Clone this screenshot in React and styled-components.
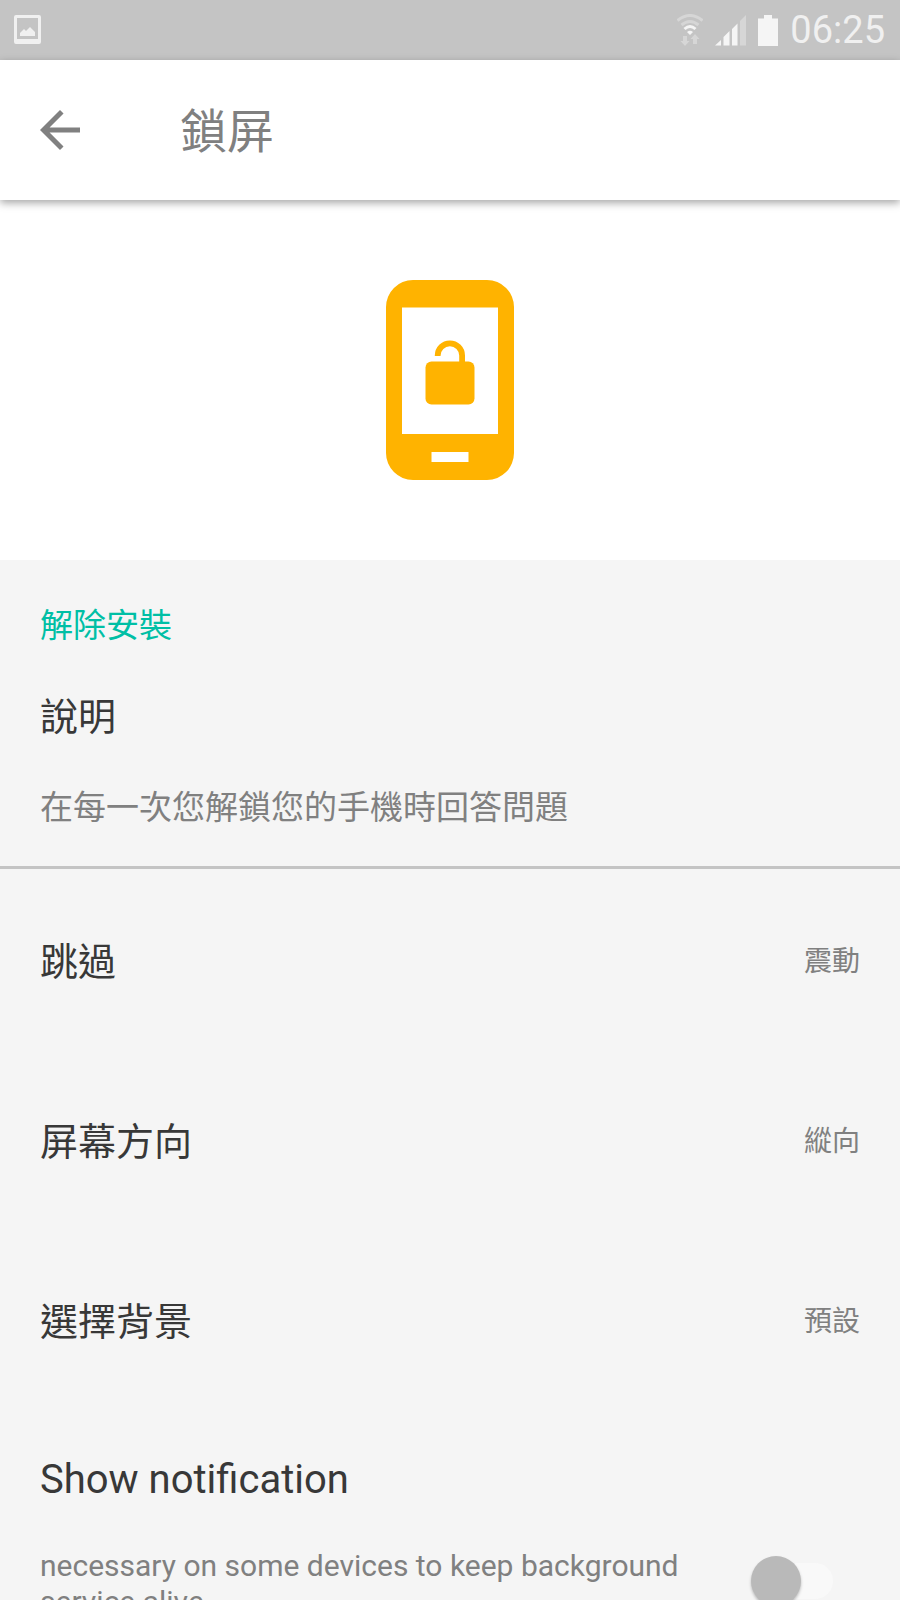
import React, { useState } from 'react';
import styled, { createGlobalStyle } from 'styled-components';

const settings = [
  { name: '跳過', value: '震動' },
  { name: '屏幕方向', value: '縱向' },
  { name: '選擇背景', value: '預設' },
];

const StatusBar = () => {
  return (
    <StatusDiv>
      <svg width="28" height="30" viewBox="0 0 28 30" aria-hidden="true">
        <path
          fill="#f0f0f0"
          fillRule="evenodd"
          d="M2 0H25Q27 0 27 2V27Q27 29 25 29H2Q0 29 0 27V2Q0 0 2 0ZM3 3V24H24V3Z"
        />
        <path fill="#f0f0f0" d="M6 18L10 14L12 16L16 12L21 17V21H6Z" />
      </svg>
      <StatusIcons>
        <svg width="26" height="32" viewBox="1 0 26 32" aria-hidden="true">
          <g fill="none" strokeWidth="3">
            <path stroke="#d6d6d6" d="M1.500 6.500Q14 -3.500 26.500 6.500" />
            <path stroke="#d6d6d6" d="M5.500 11Q14 4 22.500 11" />
            <path stroke="#f5f5f5" d="M8.500 15Q14 10 19.500 15" />
          </g>
          <path fill="#f5f5f5" d="M11 18Q14 15.500 17 18L14 21Z" />
          <path fill="#d6d6d6" d="M7 22H11V27H13.500L9 32L4.500 27H7ZM17 30V25H14.500L19 20L23.500 25H21V30Z" />
        </svg>
        <svg width="31" height="31" viewBox="0 0 31 31" aria-hidden="true">
          <path fill="#f5f5f5" d="M0 30.500L6 25V30.500ZM8.500 30.500V22L14.500 16V30.500ZM17 30.500V14L22.500 8.500V30.500Z" />
          <path fill="#d6d6d6" d="M25 30.500V6L31 0V30.500Z" />
        </svg>
        <svg width="20" height="31" viewBox="0 0 20 31" aria-hidden="true">
          <path fill="#f5f5f5" d="M6 0H14V3.500H20V31H0V3.500H6Z" />
        </svg>
        <Clock>06:25</Clock>
      </StatusIcons>
    </StatusDiv>
  );
};

const PhoneIcon = () => {
  return (
    <svg width="128" height="200" viewBox="0 0 128 200" aria-hidden="true">
      <path
        fill="#ffb300"
        fillRule="evenodd"
        d="M27 0H101A27 27 0 0 1 128 27V173A27 27 0 0 1 101 200H27A27 27 0 0 1 0 173V27A27 27 0 0 1 27 0ZM16 27.500V154H112V27.500ZM45.500 172V182H82.500V172Z"
      />
      <rect x="39.500" y="81.500" width="49" height="43" rx="6" fill="#ffb300" />
      <path fill="none" stroke="#ffb300" strokeWidth="5.800" d="M51.700 76V75.500A12.200 12.200 0 0 1 76.100 75.500V83" />
    </svg>
  );
};

const App = () => {
  const [notification, setNotification] = useState(false);

  return (
    <>
      <GlobalStyle />
      <Screen>
        <StatusBar />
        <TopBar>
          <BackButton aria-label="返回">
            <svg width="60" height="60" viewBox="0 0 24 24" aria-hidden="true">
              <path fill="#808080" d="M20 11H7.830l5.590-5.590L12 4l-8 8 8 8 1.410-1.410L7.830 13H20v-2z" />
            </svg>
          </BackButton>
          <Title>鎖屏</Title>
        </TopBar>
        <HeroDiv>
          <PhoneIcon />
        </HeroDiv>
        <InfoDiv>
          <UninstallButton>解除安裝</UninstallButton>
          <InfoTitle>說明</InfoTitle>
          <InfoText>在每一次您解鎖您的手機時回答問題</InfoText>
        </InfoDiv>
        {settings.map((item) => (
          <SettingRow key={item.name}>
            <RowName>{item.name}</RowName>
            <RowValue>{item.value}</RowValue>
          </SettingRow>
        ))}
        <NotificationDiv>
          <NotificationLabel htmlFor="notification">Show notification</NotificationLabel>
          <NotificationRow>
            <NotificationText id="notification-text">
              necessary on some devices to keep background service alive
            </NotificationText>
            <Switch
              id="notification"
              type="checkbox"
              role="switch"
              aria-describedby="notification-text"
              checked={notification}
              onChange={(e) => setNotification(e.target.checked)}
            />
          </NotificationRow>
        </NotificationDiv>
      </Screen>
    </>
  );
};

const GlobalStyle = createGlobalStyle`
  * {
    box-sizing: border-box;
  }
  body {
    margin: 0;
    background-color: #f5f5f5;
    font-family: Roboto, 'Noto Sans CJK TC', sans-serif;
  }
  button {
    border: none;
    padding: 0;
    background: transparent;
    font-family: inherit;
    cursor: pointer;
  }
  svg {
    display: block;
    flex-shrink: 0;
  }
`;

const Screen = styled.div`
  height: 100vh;
  overflow: hidden;
`;

const StatusDiv = styled.div`
  height: 60px;
  padding: 0 15px 0 14px;
  display: flex;
  align-items: center;
  justify-content: space-between;
  background-color: #c4c4c4;
`;

const StatusIcons = styled.div`
  display: flex;
  align-items: center;
  gap: 12px;
`;

const Clock = styled.span`
  font-size: 38px;
  line-height: 60px;
  color: #f0f0f0;
`;

const TopBar = styled.header`
  height: 140px;
  padding: 0 30px;
  display: flex;
  align-items: center;
  gap: 90px;
  position: relative;
  background-color: white;
  box-shadow: 0 3px 8px rgba(0, 0, 0, 0.35);
`;

const BackButton = styled.button`
  width: 60px;
  height: 60px;
`;

const Title = styled.h1`
  margin: 0;
  padding-top: 4px;
  font-size: 47px;
  font-weight: 400;
  line-height: 60px;
  color: #808080;
`;

const HeroDiv = styled.div`
  padding: 80px 0;
  display: flex;
  justify-content: center;
  background-color: white;
`;

const InfoDiv = styled.section`
  margin-bottom: 3px;
  padding: 41px 40px 33px;
  display: flex;
  flex-direction: column;
  align-items: flex-start;
  gap: 41px;
  border-bottom: 3px solid #c4c4c4;
`;

const UninstallButton = styled.button`
  font-size: 33px;
  line-height: 50px;
  color: #00bfa5;
`;

const InfoTitle = styled.h2`
  margin: 0;
  font-size: 38px;
  font-weight: 400;
  line-height: 50px;
  color: #383838;
`;

const InfoText = styled.p`
  margin: 0;
  font-size: 33px;
  line-height: 50px;
  color: #808080;
`;

const SettingRow = styled.button`
  width: 100%;
  height: 180px;
  padding: 0 40px;
  display: flex;
  align-items: center;
  justify-content: space-between;
`;

const RowName = styled.span`
  font-size: 38px;
  line-height: 50px;
  color: #383838;
`;

const RowValue = styled.span`
  font-size: 28px;
  line-height: 50px;
  color: #808080;
`;

const NotificationDiv = styled.div`
  padding: 40px;
`;

const NotificationLabel = styled.label`
  display: block;
  font-size: 40px;
  line-height: 56px;
  color: #383838;
`;

const NotificationRow = styled.div`
  margin-top: 40px;
  display: flex;
  align-items: center;
  justify-content: space-between;
`;

const NotificationText = styled.p`
  margin: 0;
  flex: 1;
  font-size: 30px;
  line-height: 36px;
  color: #808080;
`;

const Switch = styled.input`
  appearance: none;
  width: 82px;
  height: 52px;
  margin: 0 27px 6px;
  display: grid;
  align-items: center;
  cursor: pointer;

  &:before {
    content: "";
    grid-area: 1 / 1;
    height: 36px;
    margin-left: 10px;
    border-radius: 18px;
    background-color: ${({ checked }) => (checked ? '#99e5db' : '#f9f9f9')};
  }

  &:after {
    content: "";
    grid-area: 1 / 1;
    justify-self: ${({ checked }) => (checked ? 'end' : 'start')};
    width: 50px;
    height: 50px;
    border-radius: 50%;
    background-color: ${({ checked }) => (checked ? '#00bfa5' : '#b9b9b9')};
    box-shadow: 0 2px 3px rgba(0, 0, 0, 0.25);
  }
`;

export default App;
